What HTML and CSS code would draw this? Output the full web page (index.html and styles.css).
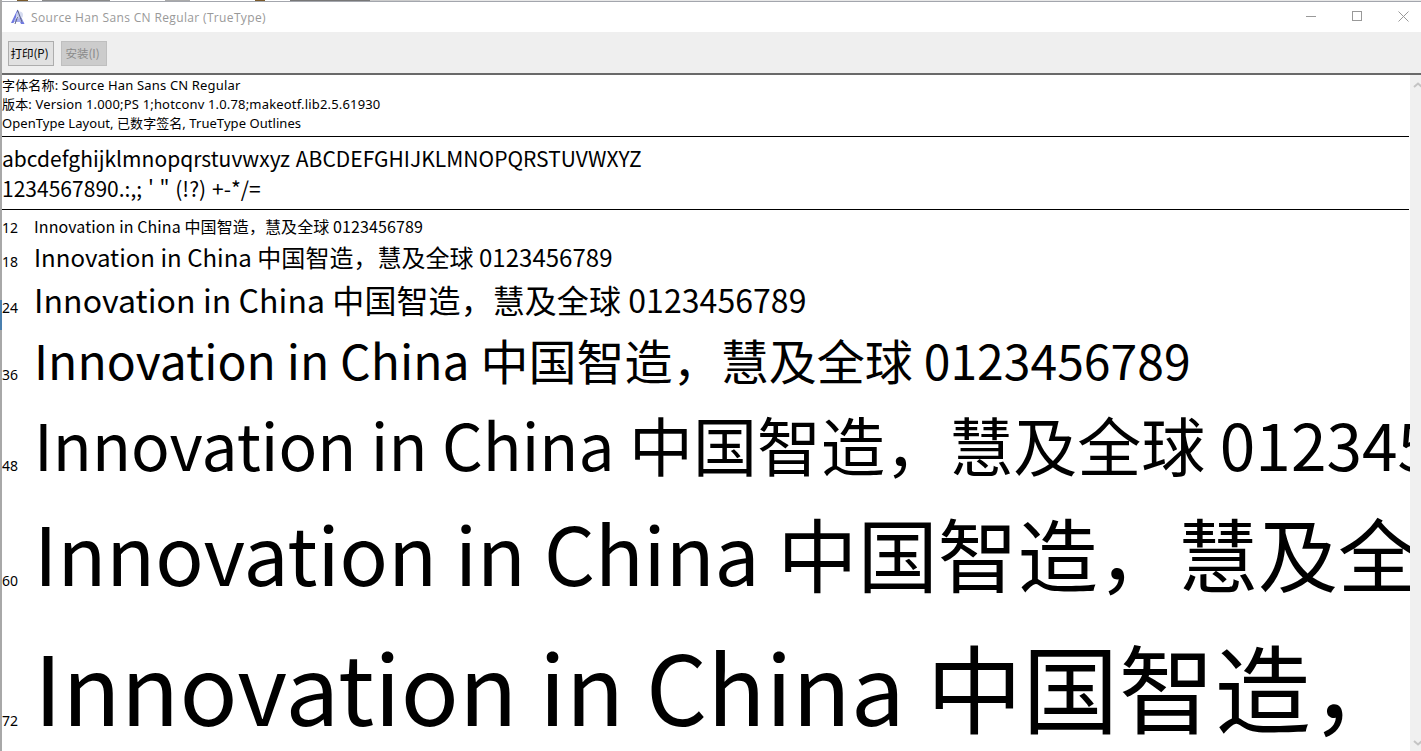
FILE: index.html
```html
<!DOCTYPE html>
<html lang="zh-CN">
<head>
<meta charset="utf-8">
<title>Source Han Sans CN Regular (TrueType)</title>
<link rel="stylesheet" href="styles.css">
</head>
<body>
<div class="window">
  <div class="desk-strip"></div>
  <header class="titlebar">
    <svg class="app-icon" width="16" height="16" viewBox="0 0 16 16"><path d="M7.5 0.5 L1 14 H3.5 L7 6 L11 15 H14.5 Z" fill="#6f78e0"/><path d="M5 9.5 H11.5 L13 13 H4 Z" fill="#a9b0ee"/><circle cx="9.5" cy="6" r="3.5" fill="#cfd6ee" opacity=".85"/><path d="M7.5 8 L5 15 M7.5 1 L12 13" stroke="#555a78" stroke-width=".9" fill="none"/></svg>
    <span class="title">Source Han Sans CN Regular (TrueType)</span>
    <div class="winctl">
      <span class="ctl"><svg width="10" height="10" viewBox="0 0 10 10"><path d="M0 5.5H10" stroke="#999" fill="none"/></svg></span>
      <span class="ctl"><svg width="10" height="10" viewBox="0 0 10 10"><rect x=".5" y=".5" width="9" height="9" stroke="#999" fill="none"/></svg></span>
      <span class="ctl"><svg width="11" height="11" viewBox="0 0 11 11"><path d="M.5 .5L10.5 10.5M10.5 .5L.5 10.5" stroke="#999" fill="none"/></svg></span>
    </div>
  </header>
  <div class="toolbar">
    <button class="btn">打印(P)</button>
    <button class="btn off">安装(I)</button>
  </div>
  <main class="view">
    <div class="pane">
      <section class="info">
        <div class="name">字体名称: Source Han Sans CN Regular</div>
        <div class="version">版本: Version 1.000;PS 1;hotconv 1.0.78;makeotf.lib2.5.61930</div>
        <div class="kind">OpenType Layout, 已数字签名, TrueType Outlines</div>
      </section>
      <section class="chars">
        <div>abcdefghijklmnopqrstuvwxyz ABCDEFGHIJKLMNOPQRSTUVWXYZ</div>
        <div>1234567890.:,; ' " (!?) +-*/=</div>
      </section>
      <section class="samples">
        <div class="row r12"><span class="size">12</span><span class="sample">Innovation in China 中国智造，慧及全球 0123456789</span></div>
        <div class="row r18"><span class="size">18</span><span class="sample">Innovation in China 中国智造，慧及全球 0123456789</span></div>
        <div class="row r24"><span class="size">24</span><span class="sample">Innovation in China 中国智造，慧及全球 0123456789</span></div>
        <div class="row r36"><span class="size">36</span><span class="sample">Innovation in China 中国智造，慧及全球 0123456789</span></div>
        <div class="row r48"><span class="size">48</span><span class="sample">Innovation in China 中国智造，慧及全球 0123456789</span></div>
        <div class="row r60"><span class="size">60</span><span class="sample">Innovation in China 中国智造，慧及全球 0123456789</span></div>
        <div class="row r72"><span class="size">72</span><span class="sample">Innovation in China 中国智造，慧及全球 0123456789</span></div>
      </section>
    </div>
    <div class="scrollbar">
      <svg class="chev" width="9" height="6" viewBox="0 0 9 6"><path d="M1 5L5 1.5L9 5" stroke="#c4c4c4" stroke-width="2" fill="none"/></svg>
      <svg class="chev" width="9" height="6" viewBox="0 0 9 6"><path d="M1 1L5 4.5L9 1" stroke="#c4c4c4" stroke-width="2" fill="none"/></svg>
    </div>
  </main>
</div>
</body>
</html>
```
FILE: styles.css
```css
* { box-sizing: border-box; }
html, body { margin: 0; height: 100%; overflow: hidden; background: #fff; }
.window {
  width: 1421px; height: 751px; display: flex; flex-direction: column;
  border-left: 2px solid #a8a8a8;
  border-image: linear-gradient(#a8a8a8 0 300px, #4a7fae 300px 330px, #a8a8a8 330px) 1;
  overflow: hidden;
  font-family: "Noto Sans CJK SC", sans-serif; color: #000;
}
.desk-strip {
  height: 2px; flex: none; margin-left: -2px;
  border-bottom: 1px solid #a3a6ad;
  background: linear-gradient(90deg,
    #fff 0 17px, #7a5a2a 17px 28px, #fff 28px 42px, #8a8a8a 42px 110px, #fff 110px 165px,
    #aaa 165px 190px, #fff 190px 255px, #7a5a2a 255px 265px, #fff 265px 290px,
    #777 290px 370px, #ccc 370px 420px, #e8e8e8 420px);
}
.titlebar { height: 30px; flex: none; display: flex; align-items: center; padding-left: 8px; background: #fff; }
.app-icon { flex: none; }
.title { margin-left: 5px; font: 12px "Open Sans", "Noto Sans", sans-serif; letter-spacing: .35px; color: #999; }
.winctl { margin-left: auto; margin-right: -5px; display: flex; align-self: flex-start; }
.ctl { width: 46px; height: 28px; display: flex; align-items: center; justify-content: center; }
.toolbar { height: 43px; flex: none; display: flex; align-items: flex-start; gap: 7px; padding: 9px 0 0 6px; background: #efefef; border-bottom: 2px solid #696969; }
.btn { width: 46px; height: 25px; padding: 0 3px 2px 0; font: 11.5px "Noto Sans CJK SC", sans-serif; color: #000; background: #e1e1e1; border: 1px solid #adadad; }
.btn.off { color: #8a8a8a; background: #ccc; border-color: #bfbfbf; }
.view { flex: 1; min-height: 0; display: flex; }
.pane { flex: 1; min-width: 0; overflow: hidden; padding-right: 1px; }
.scrollbar { width: 11px; flex: none; background: #f0f0f0; display: flex; flex-direction: column; justify-content: space-between; padding: 7px 0 5px 3px; overflow: hidden; }
.chev { display: block; flex: none; }
.info { height: 62px; padding-top: 1px; font: 13px/19px "Noto Sans", "Noto Sans CJK SC", sans-serif; border-bottom: 1px solid #000; white-space: nowrap; }
.name { letter-spacing: .16px; }
.version { letter-spacing: .17px; }
.kind { letter-spacing: .06px; }
.chars { height: 73px; padding-top: 6px; font-size: 21px; line-height: 30px; word-spacing: 1px; letter-spacing: .02px; border-bottom: 1px solid #000; white-space: nowrap; }
.samples { white-space: nowrap; }
.row { display: flex; align-items: baseline; }
.size { width: 32px; flex: none; font: 14px "Noto Sans", sans-serif; letter-spacing: 0; }
.sample { flex: none; }
.r12 { height: 30px; padding-top: 4px; font-size: 16px; line-height: 24px; letter-spacing: .1px; }
.r18 { height: 33px; font-size: 24px; line-height: 34px; letter-spacing: .03px; }
.r24 { height: 49px; font-size: 32px; line-height: 52px; letter-spacing: .07px; }
.r36 { height: 74px; font-size: 48px; line-height: 75px; letter-spacing: .05px; }
.r48 { height: 93px; font-size: 64px; line-height: 95px; letter-spacing: .05px; }
.r60 { height: 121px; font-size: 80px; line-height: 125px; letter-spacing: .06px; }
.r72 { height: 150px; font-size: 96px; line-height: 150px; letter-spacing: .08px; }
```
